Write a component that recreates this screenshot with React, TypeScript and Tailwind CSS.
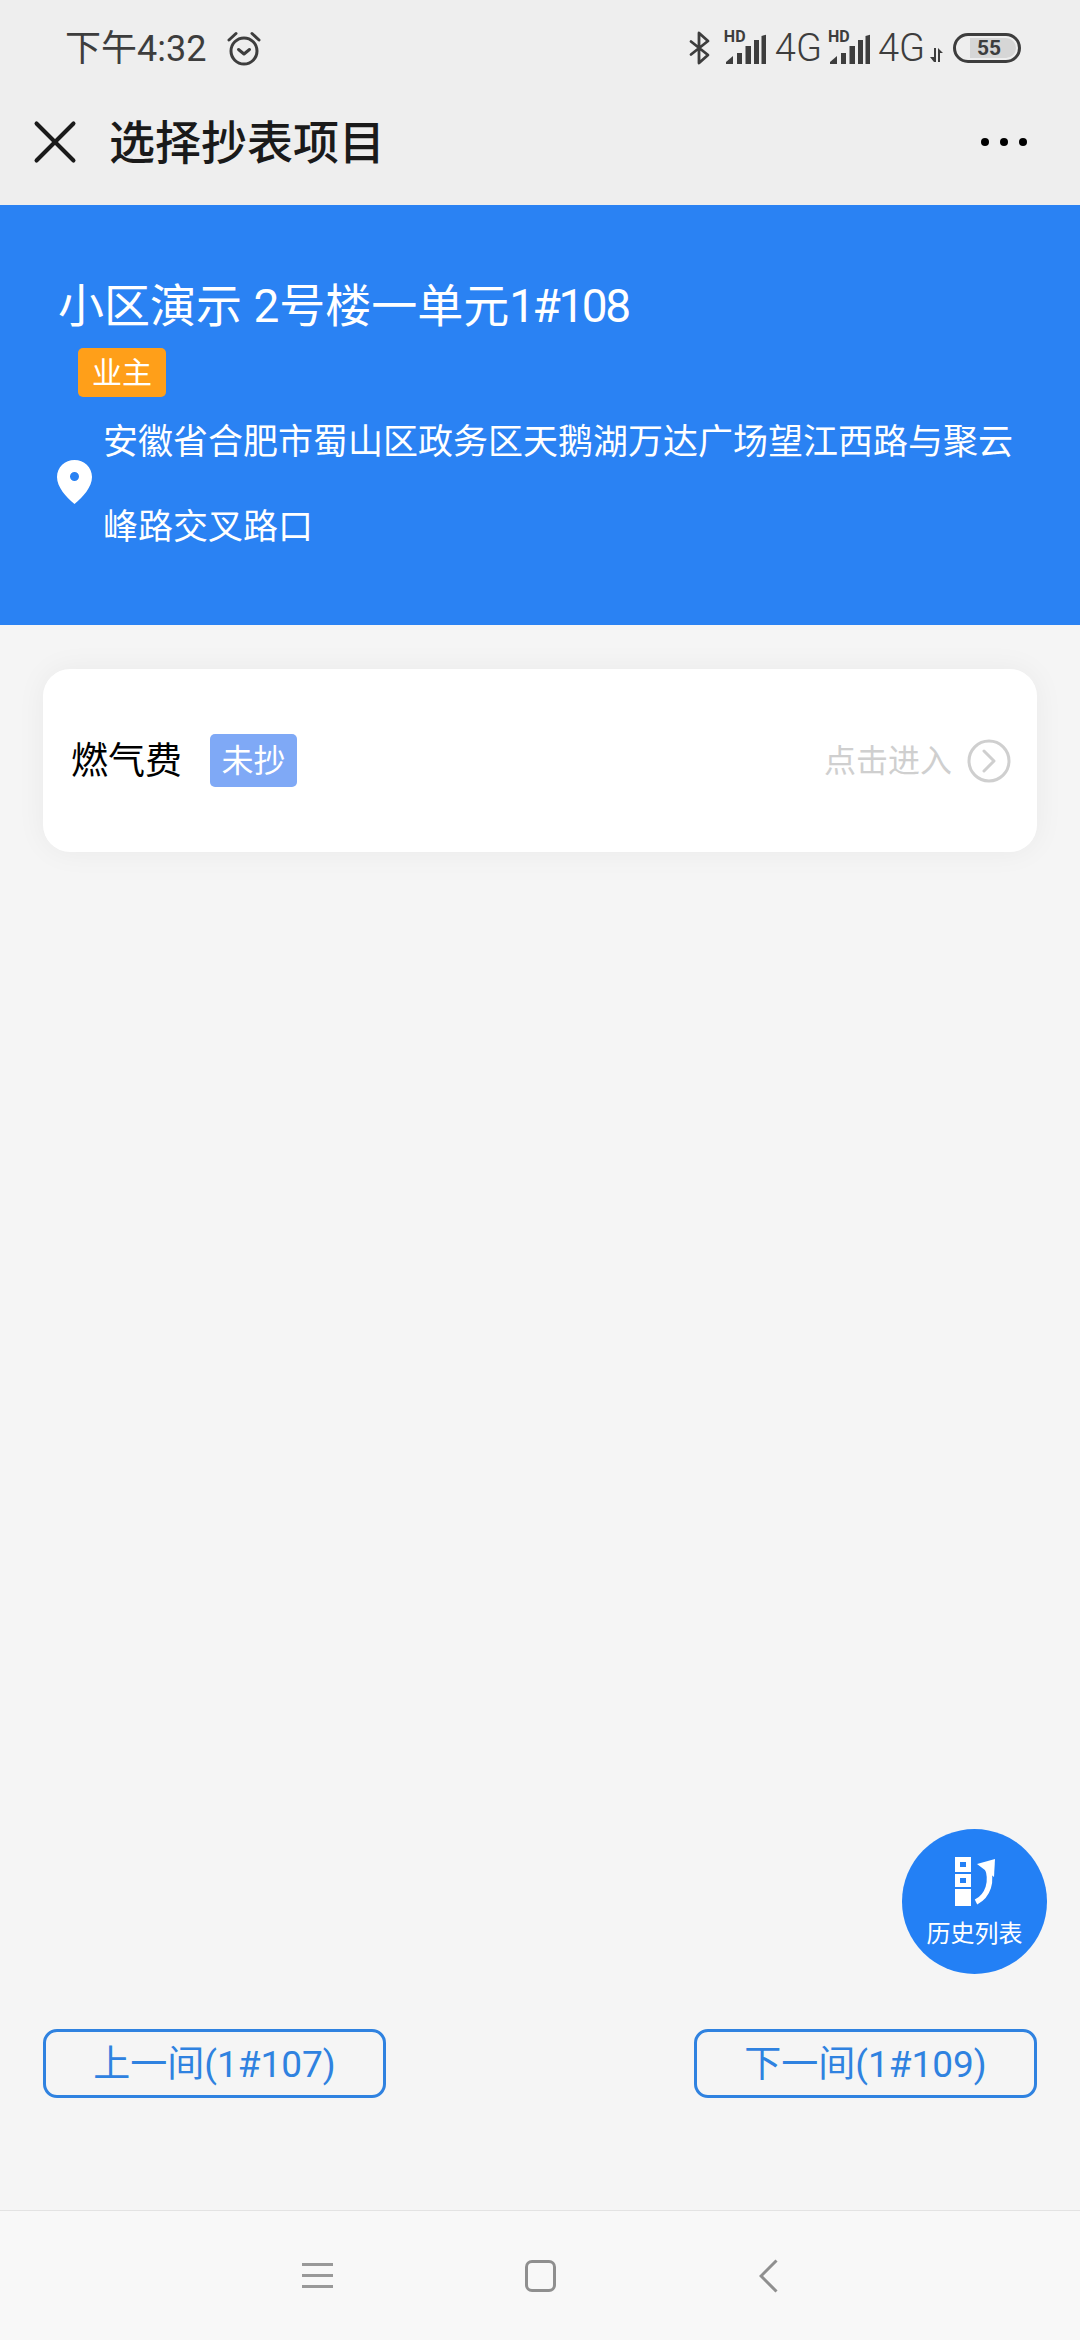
import { X } from "lucide-react";

const font = "font-['Roboto','Noto_Sans_CJK_SC',sans-serif]";

function AlarmIcon() {
  return (
    <svg width="34" height="35" viewBox="0 0 34 35" fill="none" stroke="#3d3d3d" strokeWidth="3">
      <circle cx="17" cy="20" r="13" />
      <path d="M11.500 18.500 17 23l5.500-4.500" strokeLinecap="round" strokeLinejoin="round" />
      <path d="M2 9 9 2.500M32 9l-7-6.500" strokeLinecap="round" />
    </svg>
  );
}

function BluetoothIcon() {
  return (
    <svg width="21" height="34" viewBox="0 0 21 34" fill="none" stroke="#3d3d3d" strokeWidth="2.800" strokeLinecap="round" strokeLinejoin="round">
      <path d="M2 10.500 19 24 10 32V2l9 8L2 23.500" />
    </svg>
  );
}

function Signal() {
  return (
    <div className="relative h-[31px] w-[41px]">
      <span className="absolute left-[-1px] top-[-4px] text-[16px] leading-[16px] font-bold text-[#3d3d3d]">HD</span>
      <svg className="absolute left-0 top-0" width="41" height="31" viewBox="0 0 41 31" fill="#3d3d3d">
        <path d="M1 31v-2l7-6v8z" />
        <rect x="12" y="20" width="5" height="11" />
        <rect x="20.500" y="13" width="5.500" height="18" />
        <rect x="29" y="7" width="5" height="24" />
        <path d="M36.500 3l5-1.500V31h-5z" />
      </svg>
    </div>
  );
}

function StatusBar() {
  return (
    <div className="flex h-[96px] items-center pl-[65px] pr-[59px] text-[#3d3d3d]">
      <span className="pt-[2px] text-[36px] leading-none">下午4:32</span>
      <div className="ml-[21px]">
        <AlarmIcon />
      </div>
      <div className="ml-auto flex items-center">
        <BluetoothIcon />
        <div className="ml-[15px]">
          <Signal />
        </div>
        <span className="ml-[9px] text-[38px] leading-none font-light">4G</span>
        <div className="ml-[7px]">
          <Signal />
        </div>
        <span className="ml-[8px] text-[38px] leading-none font-light">4G</span>
        <svg className="ml-[5px] mt-[14px]" width="13" height="14" viewBox="0 0 13 14" fill="#3d3d3d">
          <path d="M4 0h2v14H4L0 9h4zM8 0l5 5H10v9H8z" />
        </svg>
        <div className="ml-[10px] flex h-[30px] w-[68px] items-center rounded-full border-[3px] border-[#3d3d3d] p-[2px]">
          <div className="ml-[12px] flex h-full w-[46px] items-center justify-center rounded-r-full bg-[#d6d6d6] pr-[8px] text-[21px] font-bold leading-none">
            55
          </div>
        </div>
      </div>
    </div>
  );
}

function NavBar() {
  return (
    <div className="flex h-[92px] items-center pl-[18px] pr-[53px]">
      <X size={74} strokeWidth={1.300} className="text-[#1a1a1a]" />
      <span className="ml-[17px] pt-[2px] text-[46px] leading-none font-medium text-[#1a1a1a]">选择抄表项目</span>
      <div className="ml-auto flex gap-[11px]">
        <span className="h-[8px] w-[8px] rounded-full bg-black" />
        <span className="h-[8px] w-[8px] rounded-full bg-black" />
        <span className="h-[8px] w-[8px] rounded-full bg-black" />
      </div>
    </div>
  );
}

function PinIcon() {
  return (
    <svg width="35" height="44" viewBox="0 0 35 44">
      <path
        fillRule="evenodd"
        fill="#fff"
        d="M17.500 0C27 0 35 7 35 17c0 10-9 20-17.500 27C9 37 0 27 0 17 0 7 8 0 17.500 0zm0 12a4.500 4.500 0 1 0 0 9 4.500 4.500 0 0 0 0-9z"
      />
    </svg>
  );
}

function RoomBanner() {
  return (
    <div className="bg-[#2a82f3] pb-[55px] pl-[58px] pt-[73px] text-white">
      <div className="pt-[1px] text-[46px] leading-[55px]">
        小区演示 2号楼一单元<span className="tracking-[-2.500px]">1#108</span>
      </div>
      <div className="ml-[20px] mt-[14px] flex h-[49px] w-[88px] items-center justify-center rounded-[5px] bg-[#ff9f19] text-[30px] leading-none">
        业主
      </div>
      <div className="flex items-center">
        <div className="-ml-px mb-[3px]">
          <PinIcon />
        </div>
        <div className="ml-[11px] w-[925px] pt-[3px] text-[35px] leading-[85px]">
          安徽省合肥市蜀山区政务区天鹅湖万达广场望江西路与聚云峰路交叉路口
        </div>
      </div>
    </div>
  );
}

function MeterCard() {
  return (
    <div className="flex h-[183px] items-center rounded-[27px] bg-white pl-[28px] pr-[26px] shadow-[0_0_30px_rgba(0,0,0,0.05)]">
      <span className="pt-[2px] text-[37px] leading-none text-black">燃气费</span>
      <span className="ml-[28px] flex h-[53px] w-[87px] items-center justify-center rounded-[5px] bg-[#7fa9f6] text-[32px] leading-none text-white">
        未抄
      </span>
      <span className="ml-auto text-[32px] leading-none text-[#cfcfcf]">点击进入</span>
      <svg className="ml-[15px]" width="44" height="44" viewBox="0 0 44 44" fill="none" stroke="#cfcfcf" strokeWidth="3">
        <circle cx="22" cy="22" r="20" />
        <path d="M17 12l10 10-10 10" strokeLinecap="round" strokeLinejoin="round" />
      </svg>
    </div>
  );
}

function HistoryButton() {
  return (
    <div className="absolute bottom-[236px] right-[33px] flex h-[145px] w-[145px] flex-col items-center rounded-full bg-[#2380f5] pt-[28px] text-white">
      <svg width="42" height="49" viewBox="0 0 42 49" fill="#fff">
        <path
          fillRule="evenodd"
          d="M1 0h16v15H1zM6 5v5h6V5zM1 17h16v13H1zM6 21v5h6v-5zM1 32h16v17H1z"
        />
        <polygon points="23,7 41,2 40,20" />
        <path d="M22 45C34 39 39 24 33 10" fill="none" stroke="#fff" strokeWidth="5.500" />
      </svg>
      <span className="mt-[12px] text-[24px] leading-[32px]">历史列表</span>
    </div>
  );
}

function RoomButton({ label }: { label: string }) {
  return (
    <button className="flex h-[69px] w-[343px] items-center justify-center rounded-[14px] border-[3px] border-[#2f82e0] pt-[2px] text-[37px] leading-none text-[#2f82e0]">
      {label}
    </button>
  );
}

function SystemNav() {
  return (
    <div className="flex h-[130px] items-center justify-center border-t border-[#e3e3e3] bg-[#f8f8f8]">
      <div className="flex w-[31px] flex-col gap-[8px]">
        <span className="h-[3px] bg-[#999]" />
        <span className="h-[3px] bg-[#999]" />
        <span className="h-[3px] bg-[#999]" />
      </div>
      <span className="ml-[192px] h-[32px] w-[31px] rounded-[7px] border-[3px] border-[#8f8f8f]" />
      <svg className="ml-[203px]" width="19" height="34" viewBox="0 0 19 34" fill="none" stroke="#8f8f8f" strokeWidth="3">
        <path d="M17.500 1.500 2 17l15.500 15.500" />
      </svg>
    </div>
  );
}

export default function App() {
  return (
    <div className={`flex h-[2340px] w-[1080px] flex-col overflow-hidden bg-[#f5f5f5] ${font}`}>
      <div className="h-[205px] bg-[#eeeeee]">
        <StatusBar />
        <NavBar />
      </div>
      <RoomBanner />
      <div className="relative flex flex-1 flex-col justify-between px-[43px] pb-[112px] pt-[44px]">
        <MeterCard />
        <HistoryButton />
        <div className="flex justify-between">
          <RoomButton label="上一间(1#107)" />
          <RoomButton label="下一间(1#109)" />
        </div>
      </div>
      <SystemNav />
    </div>
  );
}
